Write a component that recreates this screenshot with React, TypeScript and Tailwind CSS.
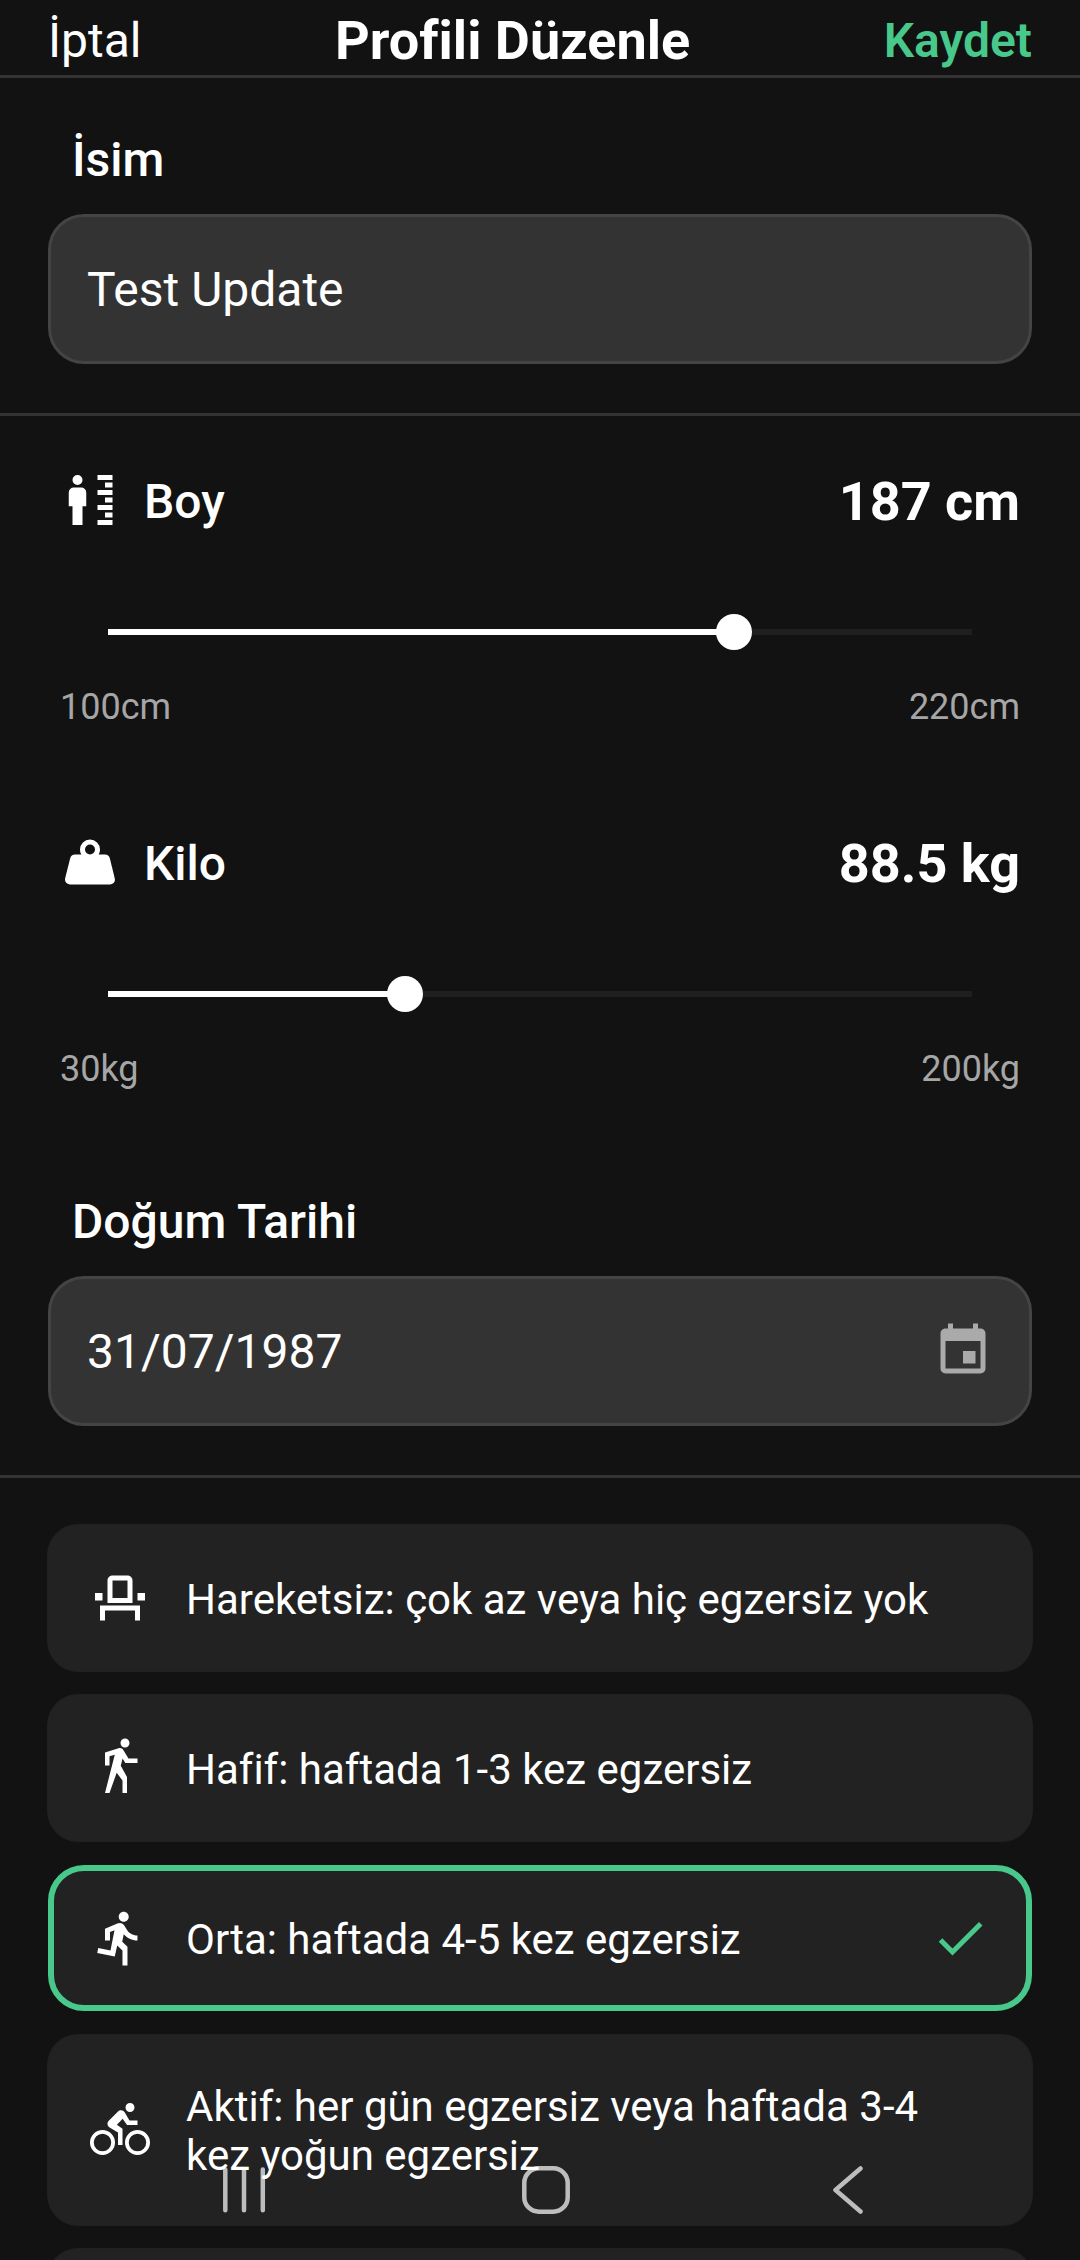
import { useState } from "react";
import type { ReactNode } from "react";

const ICONS = {
  height:
    "M7 2A2 2 0 0 1 9 4A2 2 0 0 1 7 6A2 2 0 0 1 5 4A2 2 0 0 1 7 2M5.5 7H8.5A2 2 0 0 1 10.5 9V14.5H9V22H5V14.5H3.5V9A2 2 0 0 1 5.5 7M15 2H21V4H15ZM18 5H21V7H18ZM15 8H21V10H15ZM18 11H21V13H18ZM15 14H21V16H15ZM18 17H21V19H18ZM15 20H21V22H15Z",
  weight:
    "M12,3A4,4 0 0,1 16,7C16,7.73 15.81,8.41 15.46,9H18C18.95,9 19.75,9.67 19.95,10.56C21.96,18.57 22,18.78 22,19A2,2 0 0,1 20,21H4A2,2 0 0,1 2,19C2,18.78 2.04,18.57 4.05,10.56C4.25,9.67 5.05,9 6,9H8.54C8.19,8.41 8,7.73 8,7A4,4 0 0,1 12,3M12,5A2,2 0 0,0 10,7A2,2 0 0,0 12,9A2,2 0 0,0 14,7A2,2 0 0,0 12,5Z",
  calendar:
    "M19,19H5V8H19M16,1V3H8V1H6V3H5C3.89,3 3,3.89 3,5V19A2,2 0 0,0 5,21H19A2,2 0 0,0 21,19V5C21,3.89 20.1,3 19,3H18V1M17,12H12V17H17V12Z",
  seat:
    "M15 5v7H9V5h6m0-2H9c-1.1 0-2 .9-2 2v9h10V5c0-1.1-.9-2-2-2zm7 7h-3v3h3v-3zM5 10H2v3h3v-3zm15 5H4v6h2v-4h12v4h2v-6z",
  walk:
    "M14.12,10H19V8.2H15.38L13.38,4.87C13.08,4.37 12.54,4.03 11.92,4.03C11.74,4.03 11.58,4.06 11.42,4.11L6,5.8V11H7.8V7.33L9.91,6.67L6,22H7.8L10.67,13.89L13,17V22H14.8V15.59L12.31,11.05L13.04,8.18M14,3.8C15,3.8 15.8,3 15.8,2C15.8,1 15,0.2 14,0.2C13,0.2 12.2,1 12.2,2C12.2,3 13,3.8 14,3.8Z",
  run:
    "M13.49,5.48C14.59,5.48 15.49,4.58 15.49,3.48C15.49,2.38 14.59,1.48 13.49,1.48C12.39,1.48 11.49,2.38 11.49,3.48C11.49,4.58 12.39,5.48 13.49,5.48M9.89,19.38L10.89,14.98L12.99,16.98V22.98H14.99V15.48L12.89,13.48L13.49,10.48C14.79,11.98 16.79,12.98 18.99,12.98V10.98C17.09,10.98 15.49,9.98 14.69,8.58L13.69,6.98C13.29,6.38 12.69,5.98 11.99,5.98C11.69,5.98 11.49,6.08 11.19,6.08L5.99,8.28V12.98H7.99V9.58L9.79,8.88L8.19,16.98L3.29,15.98L2.89,17.98L9.89,19.38Z",
  bike:
    "M5,20.5A3.5,3.5 0 0,1 1.5,17A3.5,3.5 0 0,1 5,13.5A3.5,3.5 0 0,1 8.5,17A3.5,3.5 0 0,1 5,20.5M5,12A5,5 0 0,0 0,17A5,5 0 0,0 5,22A5,5 0 0,0 10,17A5,5 0 0,0 5,12M14.8,10H19V8.2H15.8L13.86,4.93C13.57,4.43 13,4.1 12.4,4.1C11.93,4.1 11.5,4.29 11.2,4.6L7.5,8.29C7.19,8.6 7,9 7,9.5C7,10.13 7.33,10.66 7.85,10.97L11.2,13V18H13V11.5L10.75,9.85L13.07,7.5M19,20.5A3.5,3.5 0 0,1 15.5,17A3.5,3.5 0 0,1 19,13.5A3.5,3.5 0 0,1 22.5,17A3.5,3.5 0 0,1 19,20.5M19,12A5,5 0 0,0 14,17A5,5 0 0,0 19,22A5,5 0 0,0 24,17A5,5 0 0,0 19,12M16,4.8C17,4.8 17.8,4 17.8,3C17.8,2 17,1.2 16,1.2C15,1.2 14.2,2 14.2,3C14.2,4 15,4.8 16,4.8Z",
  check: "M21,7L9,19L3.5,13.5L4.91,12.09L9,16.17L19.59,5.59L21,7Z",
};

function Icon({ d }: { d: string }) {
  return (
    <svg viewBox="0 0 24 24" fill="currentColor" className="size-15 shrink-0" aria-hidden="true">
      <path d={d} />
    </svg>
  );
}

function Field({ id, label, children }: { id: string; label: string; children: ReactNode }) {
  return (
    <div className="flex flex-col gap-[26px] px-12">
      <label htmlFor={id} className="px-6 text-[48px] leading-[56px] font-medium">
        {label}
      </label>
      <div className="flex h-[150px] items-center rounded-[36px] border-3 border-[#444] bg-[#333] px-9">
        {children}
      </div>
    </div>
  );
}

interface MeasureProps {
  id: string;
  label: string;
  icon: string;
  unit: string;
  min: number;
  max: number;
  step: number;
  initial: number;
}

function Measure({ id, label, icon, unit, min, max, step, initial }: MeasureProps) {
  const [value, setValue] = useState(initial);
  return (
    <div className="flex flex-col">
      <div className="flex justify-between px-15">
        <div className="flex items-start gap-6">
          <Icon d={icon} />
          <label htmlFor={id} className="text-[48px] leading-[64px] font-medium">
            {label}
          </label>
        </div>
        <output htmlFor={id} className="text-[54px] leading-[64px] font-bold">
          {value} {unit}
        </output>
      </div>
      <div className="mx-[90px] mt-20 grid items-center">
        <div className="mx-[18px] h-1.5 bg-[#1f1f1f] [grid-area:1/1]">
          <div className="h-full bg-white" style={{ width: `${((value - min) / (max - min)) * 100}%` }} />
        </div>
        <input
          id={id}
          type="range"
          min={min}
          max={max}
          step={step}
          value={value}
          onChange={(e) => setValue(Number(e.target.value))}
          className="h-9 w-full cursor-pointer appearance-none bg-transparent [grid-area:1/1] [&::-webkit-slider-thumb]:size-9 [&::-webkit-slider-thumb]:appearance-none [&::-webkit-slider-thumb]:rounded-full [&::-webkit-slider-thumb]:bg-white"
        />
      </div>
      <div className="mt-9 flex justify-between px-15 text-[36px] leading-[42px] text-[#a6a6a6]">
        <span>{min}{unit}</span>
        <span>{max}{unit}</span>
      </div>
    </div>
  );
}

const LEVELS = [
  { id: "sedentary", icon: ICONS.seat, text: "Hareketsiz: çok az veya hiç egzersiz yok" },
  { id: "light", icon: ICONS.walk, text: "Hafif: haftada 1-3 kez egzersiz" },
  { id: "moderate", icon: ICONS.run, text: "Orta: haftada 4-5 kez egzersiz" },
  { id: "active", icon: ICONS.bike, text: "Aktif: her gün egzersiz veya haftada 3-4 kez yoğun egzersiz" },
];

function ActivityLevels() {
  const [selected, setSelected] = useState("moderate");
  return (
    <div role="radiogroup" aria-label="Aktivite" className="flex flex-col gap-6 px-12 pt-[47px]">
      {LEVELS.map((level) => {
        const active = level.id === selected;
        return (
          <label
            key={level.id}
            className={
              active
                ? "relative flex cursor-pointer items-center rounded-[36px] border-6 border-[#48c88a] bg-[#222] px-9 py-[37px]"
                : "relative flex cursor-pointer items-center rounded-[30px] bg-[#222] px-[42px] py-[43px] ring-1 ring-[#202020]"
            }
          >
            <input
              type="radio"
              name="activity"
              className="sr-only"
              checked={active}
              onChange={() => setSelected(level.id)}
            />
            <Icon d={level.icon} />
            <span className="mx-9 flex-1 pt-1 pb-0.5 text-[42px] leading-[49px]">{level.text}</span>
            {active && (
              <span className="text-[#48c88a]">
                <Icon d={ICONS.check} />
              </span>
            )}
          </label>
        );
      })}
      <div className="h-[146px] shrink-0 rounded-[30px] bg-[#222] ring-1 ring-[#202020]" />
    </div>
  );
}

function SystemNav() {
  return (
    <nav
      aria-label="Sistem"
      className="fixed inset-x-0 bottom-0 grid h-[140px] grid-cols-3 place-items-center pr-[81px] pl-[93px] text-white/70"
    >
      <button type="button" aria-label="Son uygulamalar">
        <svg viewBox="0 0 48 48" className="size-12" fill="none" stroke="currentColor" strokeWidth="4.5" strokeLinecap="round">
          <path d="M5.3 3.5V44.3M24 3.5V44.3M42.8 3.5V44.3" />
        </svg>
      </button>
      <button type="button" aria-label="Ana ekran">
        <svg viewBox="0 0 48 48" className="size-12" fill="none" stroke="currentColor" strokeWidth="4.5">
          <rect x="2.3" y="2.3" width="43.4" height="43.4" rx="14.5" />
        </svg>
      </button>
      <button type="button" aria-label="Geri">
        <svg viewBox="0 0 48 48" className="size-12" fill="none" stroke="currentColor" strokeWidth="4.5" strokeLinecap="round" strokeLinejoin="round">
          <path d="M36.5 2.5L11.5 24L36.5 45.5" />
        </svg>
      </button>
    </nav>
  );
}

export default function App() {
  const [name, setName] = useState("Test Update");
  const [date, setDate] = useState("31/07/1987");

  return (
    <div className="flex h-screen flex-col overflow-hidden bg-[#121212] font-['Roboto',sans-serif] text-white [font-variant-ligatures:none]">
      <header className="flex shrink-0 items-center justify-between border-b-3 border-[#333] px-12 pt-[9px] pb-0.5">
        <button type="button" className="text-[48px] leading-[56px]">
          İptal
        </button>
        <h1 className="text-[54px] leading-[64px] font-bold">Profili Düzenle</h1>
        <button type="button" className="text-[48px] leading-[56px] font-semibold text-[#48c88a]">
          Kaydet
        </button>
      </header>

      <main className="min-h-0 flex-1 overflow-hidden">
        <section className="border-b-3 border-[#333] pt-[54px] pb-[49px]">
          <Field id="name" label="İsim">
            <input
              id="name"
              type="text"
              value={name}
              onChange={(e) => setName(e.target.value)}
              className="min-w-0 flex-1 bg-transparent pt-0.5 text-[48px] leading-[56px] outline-none"
            />
          </Field>
        </section>

        <section className="flex flex-col gap-26 border-b-3 border-[#333] pt-[54px] pb-[49px]">
          <Measure id="height" label="Boy" icon={ICONS.height} unit="cm" min={100} max={220} step={1} initial={187} />
          <Measure id="weight" label="Kilo" icon={ICONS.weight} unit="kg" min={30} max={200} step={0.5} initial={88.5} />
          <Field id="birthdate" label="Doğum Tarihi">
            <input
              id="birthdate"
              type="text"
              inputMode="numeric"
              value={date}
              onChange={(e) => setDate(e.target.value)}
              className="min-w-0 flex-1 bg-transparent pt-0.5 text-[48px] leading-[56px] outline-none"
            />
            <button type="button" aria-label="Tarih seç" className="text-[#aaa]">
              <Icon d={ICONS.calendar} />
            </button>
          </Field>
        </section>

        <ActivityLevels />
      </main>

      <SystemNav />
    </div>
  );
}
